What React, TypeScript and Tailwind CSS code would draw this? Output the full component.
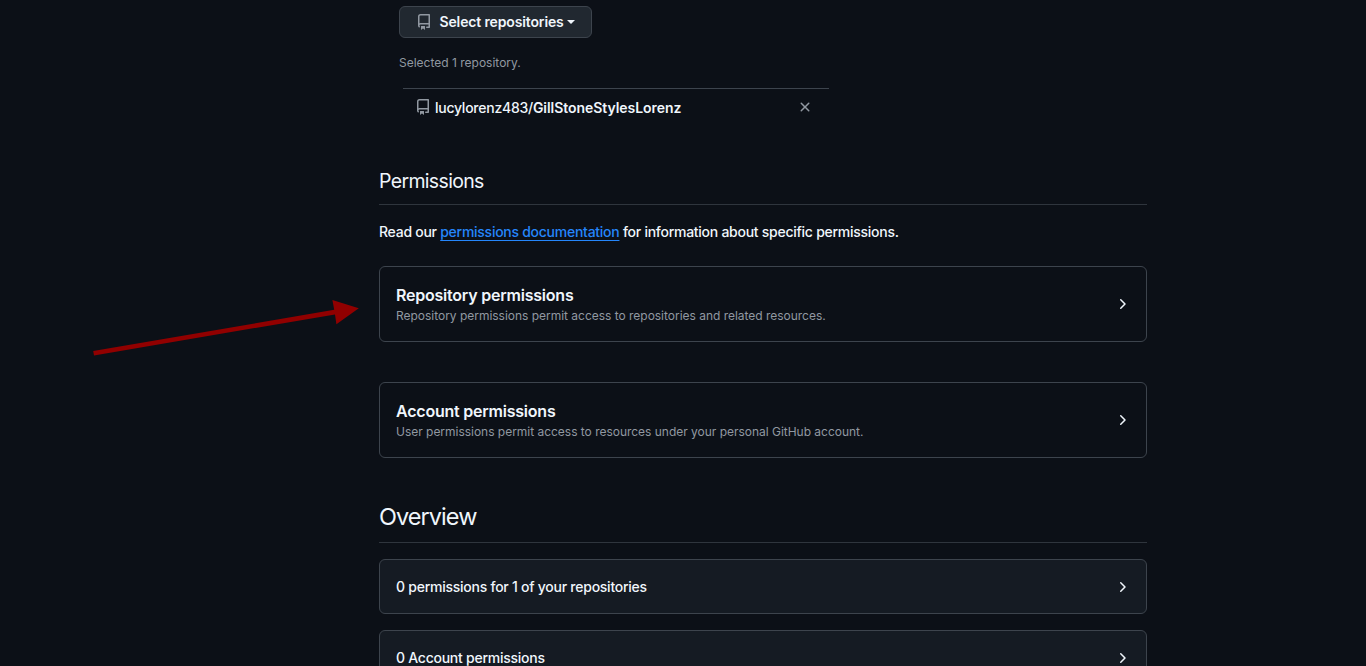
import type { ReactNode } from "react";

function RepoIcon({ className = "" }: { className?: string }) {
  return (
    <svg className={`shrink-0 fill-[#9198a1] ${className}`} width="16" height="16" viewBox="0 0 16 16">
      <path d="M2 2.5A2.5 2.5 0 0 1 4.5 0h8.75a.75.75 0 0 1 .75.75v12.5a.75.75 0 0 1-.75.75h-2.5a.75.75 0 0 1 0-1.5h1.75v-2h-8a1 1 0 0 0-.714 1.7.75.75 0 1 1-1.072 1.05A2.495 2.495 0 0 1 2 11.5Zm10.5-1h-8a1 1 0 0 0-1 1v6.708A2.486 2.486 0 0 1 4.5 9h8ZM5 12.25a.25.25 0 0 1 .25-.25h3.5a.25.25 0 0 1 .25.25v3.25a.25.25 0 0 1-.4.2l-1.45-1.087a.249.249 0 0 0-.3 0L5.4 15.7a.25.25 0 0 1-.4-.2Z" />
    </svg>
  );
}

function CloseIcon() {
  return (
    <svg className="shrink-0 fill-[#9198a1]" width="16" height="16" viewBox="0 0 16 16">
      <path d="M3.72 3.72a.75.75 0 0 1 1.06 0L8 6.94l3.22-3.22a.749.749 0 0 1 1.275.326.749.749 0 0 1-.215.734L9.06 8l3.22 3.22a.749.749 0 0 1-.326 1.275.749.749 0 0 1-.734-.215L8 9.06l-3.22 3.22a.751.751 0 0 1-1.042-.018.751.751 0 0 1-.018-1.042L6.94 8 3.72 4.78a.75.75 0 0 1 0-1.06Z" />
    </svg>
  );
}

function ChevronRight() {
  return (
    <svg className="shrink-0 fill-[#f0f6fc]" width="16" height="16" viewBox="0 0 16 16">
      <path d="M6.22 3.22a.75.75 0 0 1 1.06 0l4.25 4.25a.75.75 0 0 1 0 1.06l-4.25 4.25a.751.751 0 0 1-1.042-.018.751.751 0 0 1-.018-1.042L9.94 8 6.22 4.28a.75.75 0 0 1 0-1.06Z" />
    </svg>
  );
}

function PermissionCard({ title, children }: { title: string; children: ReactNode }) {
  return (
    <section className="flex h-[76px] items-center justify-between rounded-md border border-[#3d444d] px-4">
      <div>
        <h3 className="text-base leading-6 font-semibold tracking-[-0.22px]">{title}</h3>
        <p className="text-xs leading-[18px] font-normal tracking-[-0.02px] text-[#9198a1]">{children}</p>
      </div>
      <ChevronRight />
    </section>
  );
}

function OverviewRow({ children }: { children: ReactNode }) {
  return (
    <div className="flex h-[55px] shrink-0 items-center justify-between rounded-md border border-[#3d444d] bg-[#151b23] px-4">
      <span>{children}</span>
      <ChevronRight />
    </div>
  );
}

export default function App() {
  return (
    <div className="relative h-[666px] overflow-hidden bg-[#0c1017] font-['Inter',sans-serif] text-sm font-[450] tracking-[-0.25px] text-[#f0f6fc]">
      <main className="ml-[379px] flex w-[768px] flex-col">
        <div className="flex flex-col items-start pt-1.5 pl-5">
          <button className="flex h-8 w-[193px] items-center rounded-md border border-[#3d444d] bg-[#212830] pl-4 font-semibold tracking-[-0.14px]">
            <RepoIcon />
            <span className="ml-[7.5px] w-[124px] whitespace-nowrap">Select repositories</span>
            <span className="ml-[3.5px] border-x-4 border-t-4 border-x-transparent border-t-[#f0f6fc]" />
          </button>
          <p className="mt-4 text-xs leading-[18px] font-normal tracking-normal text-[#9198a1]">Selected 1 repository.</p>
          <div className="mt-4 ml-1 flex h-[39px] w-[426px] items-center justify-between border-t border-[#3d444d] pr-4 pl-3">
            <div className="flex items-center">
              <RepoIcon className="mb-0.5" />
              <span className="ml-1">
                lucylorenz483/<strong className="font-semibold tracking-[-0.05px]">GillStoneStylesLorenz</strong>
              </span>
            </div>
            <span className="mb-0.5"><CloseIcon /></span>
          </div>
        </div>

        <h2 className="mt-[39px] border-b border-[#2f353d] pb-2 text-[19.5px] leading-[30px] font-normal tracking-[-0.66px]">Permissions</h2>
        <p className="mt-4 leading-[21px] tracking-[-0.265px]">
          Read our{" "}
          <a className="text-[#2586fb] underline decoration-1 underline-offset-[3px]">permissions documentation</a> for
          information about specific permissions.
        </p>

        <div className="mt-6 flex flex-col gap-10">
          <PermissionCard title="Repository permissions">
            Repository permissions permit access to repositories and related resources.
          </PermissionCard>
          <PermissionCard title="Account permissions">
            User permissions permit access to resources under your personal GitHub account.
          </PermissionCard>
        </div>

        <h2 className="mt-[41px] border-b border-[#2f353d] pb-[7px] text-[23.5px] leading-9 font-normal tracking-[-0.95px]">Overview</h2>
        <div className="mt-4 flex flex-col gap-4">
          <OverviewRow>0 permissions for 1 of your repositories</OverviewRow>
          <OverviewRow>0 Account permissions</OverviewRow>
        </div>
      </main>

      <svg className="pointer-events-none absolute top-[290px] left-[80px] fill-[#910000]" width="290" height="75" viewBox="0 0 290 75">
        <path d="M13.2 60.9 254.2 19.8 252.4 10 278.8 18.2 256.4 34.3 255 24.4 14 65.5Z" />
      </svg>
    </div>
  );
}
